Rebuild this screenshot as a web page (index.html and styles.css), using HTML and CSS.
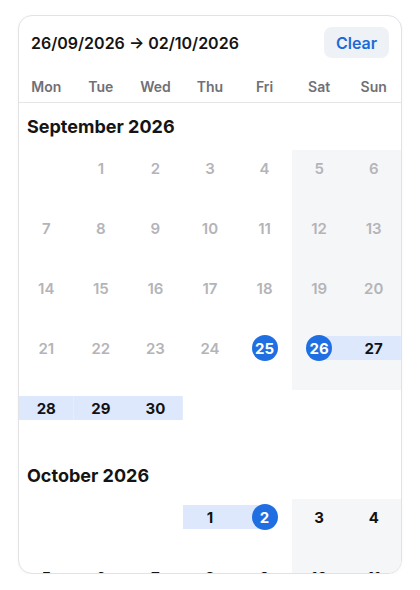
FILE: index.html
```html
<!DOCTYPE html>
<html>
<head>
<meta charset="utf-8">
<link rel="stylesheet" href="styles.css">
</head>
<body>
<div class="card">
  <div class="header">
    <div class="range">26/09/2026 → 02/10/2026</div>
    <button class="clear">Clear</button>
  </div>
  <div class="weekdays">
    <span>Mon</span><span>Tue</span><span>Wed</span><span>Thu</span><span>Fri</span><span>Sat</span><span>Sun</span>
  </div>
  <div class="scroll">
    <section class="month">
      <h2 class="title">September 2026</h2>
      <div class="grid">
        <div class="cell"></div>
        <div class="cell off"><div class="day"><span class="num">1</span></div></div>
        <div class="cell off"><div class="day"><span class="num">2</span></div></div>
        <div class="cell off"><div class="day"><span class="num">3</span></div></div>
        <div class="cell off"><div class="day"><span class="num">4</span></div></div>
        <div class="cell off we"><div class="day"><span class="num">5</span></div></div>
        <div class="cell off we"><div class="day"><span class="num">6</span></div></div>

        <div class="cell off"><div class="day"><span class="num">7</span></div></div>
        <div class="cell off"><div class="day"><span class="num">8</span></div></div>
        <div class="cell off"><div class="day"><span class="num">9</span></div></div>
        <div class="cell off"><div class="day"><span class="num">10</span></div></div>
        <div class="cell off"><div class="day"><span class="num">11</span></div></div>
        <div class="cell off we"><div class="day"><span class="num">12</span></div></div>
        <div class="cell off we"><div class="day"><span class="num">13</span></div></div>

        <div class="cell off"><div class="day"><span class="num">14</span></div></div>
        <div class="cell off"><div class="day"><span class="num">15</span></div></div>
        <div class="cell off"><div class="day"><span class="num">16</span></div></div>
        <div class="cell off"><div class="day"><span class="num">17</span></div></div>
        <div class="cell off"><div class="day"><span class="num">18</span></div></div>
        <div class="cell off we"><div class="day"><span class="num">19</span></div></div>
        <div class="cell off we"><div class="day"><span class="num">20</span></div></div>

        <div class="cell off"><div class="day"><span class="num">21</span></div></div>
        <div class="cell off"><div class="day"><span class="num">22</span></div></div>
        <div class="cell off"><div class="day"><span class="num">23</span></div></div>
        <div class="cell off"><div class="day"><span class="num">24</span></div></div>
        <div class="cell"><div class="day"><span class="num sel">25</span></div></div>
        <div class="cell we"><div class="day start"><span class="num sel">26</span></div></div>
        <div class="cell we"><div class="day mid"><span class="num">27</span></div></div>

        <div class="cell"><div class="day mid"><span class="num">28</span></div></div>
        <div class="cell"><div class="day mid"><span class="num">29</span></div></div>
        <div class="cell"><div class="day mid"><span class="num">30</span></div></div>
        <div class="cell"></div>
        <div class="cell"></div>
        <div class="cell"></div>
        <div class="cell"></div>
      </div>
    </section>
    <section class="month">
      <h2 class="title">October 2026</h2>
      <div class="grid">
        <div class="cell"></div>
        <div class="cell"></div>
        <div class="cell"></div>
        <div class="cell"><div class="day mid"><span class="num">1</span></div></div>
        <div class="cell"><div class="day end"><span class="num sel">2</span></div></div>
        <div class="cell we"><div class="day"><span class="num">3</span></div></div>
        <div class="cell we"><div class="day"><span class="num">4</span></div></div>

        <div class="cell"><div class="day"><span class="num">5</span></div></div>
        <div class="cell"><div class="day"><span class="num">6</span></div></div>
        <div class="cell"><div class="day"><span class="num">7</span></div></div>
        <div class="cell"><div class="day"><span class="num">8</span></div></div>
        <div class="cell"><div class="day"><span class="num">9</span></div></div>
        <div class="cell we"><div class="day"><span class="num">10</span></div></div>
        <div class="cell we"><div class="day"><span class="num">11</span></div></div>
      </div>
    </section>
  </div>
</div>
</body>
</html>
```

FILE: styles.css
```css
html, body {
  margin: 0;
  padding: 0;
  background: #ffffff;
}

body {
  font-family: Inter, "Liberation Sans", sans-serif;
  color: #111111;
  padding: 15px 18px 0;
}

.card {
  width: 384px;
  height: 559px;
  box-sizing: border-box;
  border: 1px solid #e2e2e5;
  border-radius: 14px;
  overflow: hidden;
  display: flex;
  flex-direction: column;
  background: #ffffff;
  box-shadow: 0 1px 3px rgba(0, 0, 0, 0.04);
}

.header {
  display: flex;
  justify-content: space-between;
  align-items: center;
  padding: 11px 12px 0 12px;
}

.range {
  font-size: 16px;
  font-weight: 600;
  color: #141414;
}

.clear {
  font-family: inherit;
  border: none;
  background: #eef1f6;
  color: #1b6ad8;
  font-size: 16px;
  font-weight: 600;
  height: 31px;
  width: 65px;
  border-radius: 8px;
  padding: 0;
}

.weekdays {
  display: grid;
  grid-template-columns: repeat(7, 1fr);
  height: 32px;
  margin-top: 12px;
  align-items: center;
  text-align: center;
  font-size: 14px;
  font-weight: 600;
  color: #707075;
  border-bottom: 1px solid #e6e6e8;
}

.scroll {
  flex: 1;
  overflow: hidden;
}

.month {
  padding: 13px 0 2px;
}

.title {
  margin: 0 0 12px 8px;
  font-size: 18px;
  line-height: 22px;
  font-weight: 700;
  color: #141414;
}

.grid {
  display: grid;
  grid-template-columns: repeat(7, 1fr);
}

.cell {
  height: 60px;
}

.cell.we {
  background: #f5f6f8;
}

.day {
  margin-top: 5px;
  height: 26px;
  display: flex;
  justify-content: center;
  background-repeat: no-repeat;
}

.day.mid {
  background-image: linear-gradient(#dde8fd, #dde8fd);
  background-size: 100% 24px;
  background-position: center;
}

.day.start {
  background-image: linear-gradient(#dde8fd, #dde8fd);
  background-size: 50% 24px;
  background-position: right center;
}

.day.end {
  background-image: linear-gradient(#dde8fd, #dde8fd);
  background-size: 50% 24px;
  background-position: left center;
}

.num {
  width: 26px;
  height: 26px;
  border-radius: 50%;
  display: flex;
  align-items: center;
  justify-content: center;
  font-size: 15px;
  font-weight: 700;
  color: #121212;
}

.off .num {
  color: #b4b4b8;
  font-weight: 600;
}

.num.sel {
  background: #1f6fe3;
  color: #ffffff;
}
```
